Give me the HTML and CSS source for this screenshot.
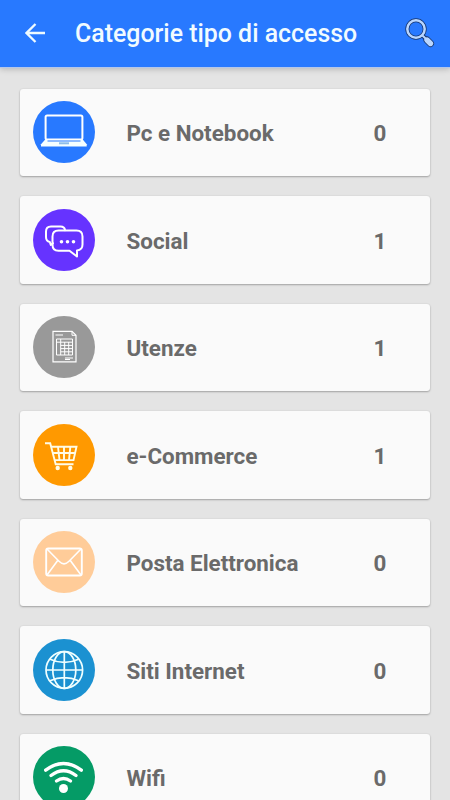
FILE: index.html
```html
<!DOCTYPE html>
<html lang="it">
<head>
<meta charset="utf-8">
<title>Categorie tipo di accesso</title>
<link rel="stylesheet" href="styles.css">
</head>
<body>
<header class="bar">
  <svg class="back" viewBox="0 0 20 20"><path d="M20 10H2M10.5 1L1.500 10l9 9" fill="none" stroke="#eefaff" stroke-width="2.300"/></svg>
  <h1 class="title">Categorie tipo di accesso</h1>
  <svg class="search" viewBox="0 0 30 30">
    <g fill="none" stroke-linecap="round"><path d="M18 18l3 3" stroke="#17366f" stroke-width="4"/><path d="M22 22l3.500 3.500" stroke="#17366f" stroke-width="7"/><circle cx="11" cy="11" r="8.700" stroke="#17366f" stroke-width="4"/><circle cx="11" cy="11" r="8.700" stroke="#b9d6ff" stroke-width="2.500"/><path d="M18 18l3 3" stroke="#b9d6ff" stroke-width="2"/><path d="M22 22l3.500 3.500" stroke="#b9d6ff" stroke-width="5.400"/></g>
  </svg>
</header>
<main class="list">
  <article class="card">
    <svg class="icon" viewBox="0 0 62 62"><circle cx="31" cy="31" r="31" fill="#2879ff"/><rect x="12.600" y="14.500" width="36.800" height="24" rx="1.500" fill="none" stroke="#fff" stroke-width="2"/><path d="M12 38.700h38l3.700 4.500v2.300H8v-2.300z" fill="#f5ffff"/><path d="M14.500 40h33" stroke="#2879ff" stroke-width="1"/><path d="M26 42.300h10" stroke="#8fbde8" stroke-width="2"/></svg>
    <span class="name">Pc e Notebook</span><span class="count">0</span>
  </article>
  <article class="card">
    <svg class="icon" viewBox="0 0 62 62"><circle cx="31" cy="31" r="31" fill="#6633ff"/><g fill="none" stroke="#fff" stroke-width="2" stroke-linejoin="round" stroke-linecap="round"><path d="M32 21.200c-.3-2.800-1.800-3.700-4.500-3.700H18c-3.400 0-5 1.600-5 5V28c0 3 1 4.500 3.800 5l1 3 2.200-1.800"/><path d="M25.500 21.500h18q6 0 6 6v8q0 5.500-5.500 6v6l-7.500-5.800h-11q-6 0-6-6v-8.200q0-6 6-6z"/></g><g fill="#fff"><circle cx="28.500" cy="32.700" r="1.800"/><circle cx="34.500" cy="32.700" r="1.800"/><circle cx="40.500" cy="32.700" r="1.800"/></g></svg>
    <span class="name">Social</span><span class="count">1</span>
  </article>
  <article class="card">
    <svg class="icon" viewBox="0 0 62 62"><circle cx="31" cy="31" r="31" fill="#999"/><g fill="none" stroke="#fff"><path d="M20 15.300h19l4 4v26.500H20z" stroke-width="1.200"/><path d="M39 15.300v4h4M22.500 19h7.500M32 42h8M32 43.500h5"/><path d="M23.500 23h16v16h-16zM27.700 23v16M31.700 26v13M35.700 26v13M23.500 26.200h16M27.700 29.400h11.800M27.700 32.600h11.800M27.700 35.800h11.800"/></g></svg>
    <span class="name">Utenze</span><span class="count">1</span>
  </article>
  <article class="card">
    <svg class="icon" viewBox="0 0 62 62"><circle cx="31" cy="31" r="31" fill="#ff9900"/><g fill="none" stroke="#fffce7" stroke-width="1.900"><path d="M12 19.200h5.200l5.500 21H40.500"/><path d="M18.200 22.800h25.300l-3 13.300H21.700M19.500 29h22.500M25 23l1.500 13M31 23v13M37.300 23L36 36"/></g><circle cx="24.700" cy="44" r="2.200" fill="#fffce7"/><circle cx="37.300" cy="44" r="2.200" fill="#fffce7"/></svg>
    <span class="name">e-Commerce</span><span class="count">1</span>
  </article>
  <article class="card">
    <svg class="icon" viewBox="0 0 62 62"><circle cx="31" cy="31" r="31" fill="#ffcc99"/><g fill="none" stroke="#fff" stroke-width="1.900"><rect x="13.200" y="17.500" width="35.600" height="27" rx="2"/><path d="M14 18l12 12.300q5 5 10 0L48 18M14 44l10.700-14.500M48 44L37.300 29.500" stroke-width="1.600"/></g></svg>
    <span class="name">Posta Elettronica</span><span class="count">0</span>
  </article>
  <article class="card">
    <svg class="icon" viewBox="0 0 62 62"><circle cx="31" cy="31" r="31" fill="#1b91d1"/><g fill="none" stroke="#efffff" stroke-width="1.700"><circle cx="31.300" cy="31" r="18.300"/><ellipse cx="31.300" cy="31" rx="11.500" ry="18.300"/><path d="M31.300 12.500v37M13 31h36.600M17 20.200q14.300 6.500 28.600 0M17 41.800q14.300-6.500 28.600 0"/></g></svg>
    <span class="name">Siti Internet</span><span class="count">0</span>
  </article>
  <article class="card">
    <svg class="icon" viewBox="0 0 62 62"><circle cx="31" cy="31" r="31" fill="#059b66"/><g fill="none" stroke="#fff" stroke-width="3.400" stroke-linecap="round"><path d="M12.700 24.200q17.800-13.400 35.600 0"/><path d="M18 29.500q12.500-9.500 25 0"/><path d="M23.500 35q7-5.200 14 0"/></g><circle cx="30.500" cy="42.500" r="4.500" fill="#fff"/></svg>
    <span class="name">Wifi</span><span class="count">0</span>
  </article>
</main>
</body>
</html>
```
FILE: styles.css
```css
* { box-sizing: border-box; }

body {
  margin: 0;
  height: 800px;
  overflow: hidden;
  background: #e4e4e4;
  font-family: Roboto, "Liberation Sans", sans-serif;
}

.bar {
  display: flex;
  align-items: center;
  height: 67px;
  padding: 0 15px 0 25px;
  background: #2879ff;
  box-shadow: 0 1px 1px #b5c7e8, 0 2px 6px rgba(0, 0, 0, .22);
}

.back { width: 20px; height: 20px; margin-top: -2px; }

.title {
  margin: 0 0 0 30px;
  color: #f1fbff;
  font-size: 24.9px;
  font-weight: 500;
  line-height: 30px;
  white-space: nowrap;
}

.search { width: 30px; height: 30px; margin: -2px 0 0 auto; }

.list {
  display: grid;
  grid-auto-rows: 87.5px;
  gap: 20px;
  padding: 21.5px 20px 0;
}

.card {
  display: grid;
  grid-template-columns: 93.5px 1fr 60px;
  align-items: center;
  padding: 0 20px 0 13px;
  border-radius: 3px;
  background: #fafafa;
  box-shadow: 0 1px 2px rgba(0, 0, 0, .28), 0 0 2px rgba(0, 0, 0, .08);
}

.icon { display: block; width: 62px; height: 62px; }

.name,
.count {
  padding-top: 2px;
  color: #6a6a6a;
  font-size: 22.4px;
  font-weight: 700;
  line-height: 28px;
  white-space: nowrap;
}

.count { text-align: center; }
```
